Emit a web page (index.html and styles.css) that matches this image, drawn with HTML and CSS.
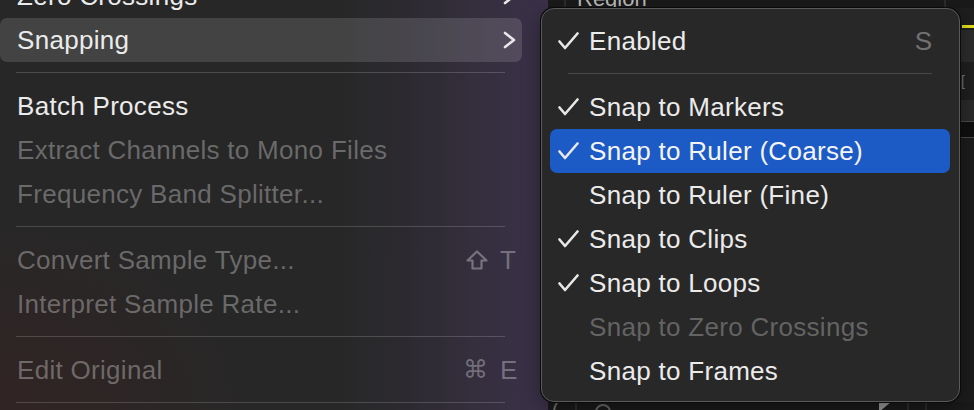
FILE: index.html
```html
<!DOCTYPE html>
<html>
<head>
<meta charset="utf-8">
<link rel="stylesheet" href="styles.css">
</head>
<body>
<div class="screen">
  <div class="main-menu">
    <div class="list">
      <div class="item"><span class="label">Zero Crossings</span><svg class="chev" viewBox="0 0 13 18"><polyline points="2,2 11,9 2,16"/></svg></div>
      <div class="item hover"><span class="label">Snapping</span><svg class="chev" viewBox="0 0 13 18"><polyline points="2,2 11,9 2,16"/></svg></div>
      <div class="sep"></div>
      <div class="item"><span class="label">Batch Process</span></div>
      <div class="item disabled"><span class="label">Extract Channels to Mono Files</span></div>
      <div class="item disabled"><span class="label">Frequency Band Splitter...</span></div>
      <div class="sep"></div>
      <div class="item disabled"><span class="label">Convert Sample Type...</span>
        <span class="key"><svg class="shift" viewBox="0 0 22 20"><path d="M11 1.5 L20.5 10.5 L15.5 10.5 L15.5 18.5 L6.5 18.5 L6.5 10.5 L1.5 10.5 Z"/></svg><span class="key-char">T</span></span></div>
      <div class="item disabled"><span class="label">Interpret Sample Rate...</span></div>
      <div class="sep"></div>
      <div class="item disabled"><span class="label">Edit Original</span>
        <span class="key"><span class="cmd">⌘</span><span class="key-char">E</span></span></div>
      <div class="sep"></div>
    </div>
  </div>

  <div class="app-bg">
    <div class="app-top">
      <span class="app-line"></span>
      <span class="app-title">Region</span>
      <span class="app-line far"></span>
    </div>
    <div class="app-mid">
      <div class="strip">
        <div class="s-a"></div>
        <div class="s-yellow"></div>
        <div class="s-b"></div>
        <div class="s-c"></div>
        <div class="s-d"><span class="bracket">[</span></div>
        <div class="s-e"></div>
        <div class="s-f"></div>
        <div class="s-g"></div>
      </div>
    </div>
    <div class="app-bottom">
      <span class="b-paren">(</span>
      <span class="app-line"></span>
      <span class="b-circle"></span>
      <span class="b-tri"></span>
      <span class="app-line"></span>
      <span class="app-line"></span>
    </div>
  </div>

  <div class="submenu">
    <div class="sub-item"><svg class="check" viewBox="0 0 21 18"><polyline points="1.5,9.5 7,16 19.5,1.5"/></svg><span class="label">Enabled</span><span class="sub-key">S</span></div>
    <div class="sub-sep"></div>
    <div class="sub-item"><svg class="check" viewBox="0 0 21 18"><polyline points="1.5,9.5 7,16 19.5,1.5"/></svg><span class="label">Snap to Markers</span></div>
    <div class="sub-item selected"><svg class="check" viewBox="0 0 21 18"><polyline points="1.5,9.5 7,16 19.5,1.5"/></svg><span class="label">Snap to Ruler (Coarse)</span></div>
    <div class="sub-item"><span class="nocheck"></span><span class="label">Snap to Ruler (Fine)</span></div>
    <div class="sub-item"><svg class="check" viewBox="0 0 21 18"><polyline points="1.5,9.5 7,16 19.5,1.5"/></svg><span class="label">Snap to Clips</span></div>
    <div class="sub-item"><svg class="check" viewBox="0 0 21 18"><polyline points="1.5,9.5 7,16 19.5,1.5"/></svg><span class="label">Snap to Loops</span></div>
    <div class="sub-item disabled"><span class="nocheck"></span><span class="label">Snap to Zero Crossings</span></div>
    <div class="sub-item"><span class="nocheck"></span><span class="label">Snap to Frames</span></div>
  </div>
</div>
</body>
</html>
```

FILE: styles.css
```css
html, body {
  margin: 0;
  padding: 0;
  background: #1c1c1c;
}

.screen {
  position: relative;
  width: 974px;
  height: 410px;
  overflow: hidden;
  display: flex;
  font-family: "Liberation Sans", Arial, sans-serif;
  font-size: 26px;
  color: #ebebeb;
}

.label {
  letter-spacing: 0.3px;
}

/* ---------- main (left) menu ---------- */
.main-menu {
  width: 548px;
  flex: none;
  height: 410px;
  background:
    radial-gradient(ellipse 260px 200px at 0% 100%, rgba(70, 30, 30, 0.35), rgba(70, 30, 30, 0) 100%),
    linear-gradient(to right, #272727 0%, #272727 62%, #2c2a30 74%, #342e3d 86%, #3b3149 100%);
}

.list {
  width: 522px;
  margin-top: -26px;
  display: flex;
  flex-direction: column;
}

.item {
  height: 44px;
  display: flex;
  align-items: center;
  padding: 0 6px 0 17px;
  border-radius: 7px;
  white-space: nowrap;
}

.item.hover {
  background: rgba(255, 255, 255, 0.135);
}

.item.disabled {
  color: rgba(255, 255, 255, 0.31);
}

.chev {
  margin-left: auto;
  width: 13px;
  height: 18px;
  fill: none;
  stroke: #e8e8e8;
  stroke-width: 2.6;
  stroke-linecap: round;
  stroke-linejoin: round;
}

.key {
  margin-left: auto;
  display: flex;
  align-items: center;
  gap: 12px;
  color: rgba(255, 255, 255, 0.31);
  padding-right: 1px;
}

.shift {
  width: 22px;
  height: 20px;
  fill: none;
  stroke: rgba(255, 255, 255, 0.33);
  stroke-width: 2.2;
  stroke-linejoin: round;
}

.cmd {
  font-family: "DejaVu Sans", sans-serif;
  font-size: 25px;
  line-height: 26px;
}

.key-char {
  width: 15px;
  text-align: center;
}

.sep {
  height: 22px;
  display: flex;
  flex-direction: column;
  justify-content: center;
  padding: 0 17px 0 16px;
}

.sep::before {
  content: "";
  display: block;
  height: 1px;
  margin-bottom: 2px;
  background: rgba(255, 255, 255, 0.17);
}

/* ---------- background app ---------- */
.app-bg {
  flex: 1;
  height: 410px;
  display: flex;
  flex-direction: column;
  background: #1d1d1d;
}

.app-top {
  height: 8px;
  flex: none;
  display: flex;
  align-items: flex-start;
  background: #1a1a1a;
  overflow: hidden;
}

.app-line {
  width: 2px;
  align-self: stretch;
  background: #2c2c2c;
  margin-left: 16px;
}

.app-line.far {
  margin-left: auto;
  margin-right: 28px;
}

.app-title {
  font-size: 22px;
  color: #bbbbbb;
  margin-left: 11px;
  line-height: 22px;
  margin-top: -12px;
}

.app-mid {
  flex: 1;
  display: flex;
  justify-content: flex-end;
}

.strip {
  width: 14px;
  display: flex;
  flex-direction: column;
  background: #1c1c1c;
}

.s-a { height: 17px; background: #1e1e1e; }
.s-yellow { height: 3px; margin-left: 2px; background: #e2df1c; }
.s-b { height: 2px; background: #1e1e1e; }
.s-c { height: 32px; background: #2c2c2c; }
.s-d {
  height: 38px;
  background: #1f1f1f;
  display: flex;
  align-items: center;
  padding-left: 1px;
}
.bracket { font-size: 14px; color: #777; line-height: 14px; }
.s-e { height: 21px; background: #2a2a2a; }
.s-f { height: 15px; background: #0f0f0f; border: 1px solid #4a4a4a; border-right: none; }
.s-g { flex: 1; background: #1c1c1c; }

.app-bottom {
  height: 8px;
  flex: none;
  display: flex;
  align-items: flex-start;
  background: #1a1a1a;
  overflow: hidden;
}

.b-paren {
  font-size: 20px;
  line-height: 20px;
  color: #777;
  margin-left: 4px;
  margin-top: -2px;
}

.b-circle {
  width: 16px;
  height: 16px;
  border: 2px solid #6a6a6a;
  border-radius: 50%;
  margin-left: 18px;
  margin-top: 2px;
  box-sizing: border-box;
}

.b-tri {
  width: 0;
  height: 0;
  border-left: 12px solid #9a9a9a;
  border-bottom: 10px solid transparent;
  margin-left: 268px;
}

/* ---------- submenu (overlay) ---------- */
.submenu {
  position: absolute;
  left: 541px;
  top: 8px;
  width: 419px;
  height: 394px;
  box-sizing: border-box;
  padding: 10px 9px 9px 8px;
  background: #282828;
  border: 1px solid #5a5a5a;
  border-radius: 13px;
  box-shadow: 0 0 0 1px #0a0a0a, 0 6px 20px rgba(0, 0, 0, 0.4);
  display: flex;
  flex-direction: column;
}

.sub-item {
  height: 44px;
  flex: none;
  display: flex;
  align-items: center;
  padding: 0 18px 0 8px;
  border-radius: 7px;
  white-space: nowrap;
}

.sub-item.selected {
  background: #1c5ac6;
  color: #f4f4f4;
}

.sub-item.disabled {
  color: rgba(255, 255, 255, 0.28);
}

.check {
  width: 21px;
  height: 18px;
  margin-right: 10px;
  flex: none;
  fill: none;
  stroke: #e8e8e8;
  stroke-width: 2.6;
  stroke-linecap: round;
  stroke-linejoin: round;
}

.nocheck {
  width: 21px;
  margin-right: 10px;
  flex: none;
}

.sub-key {
  margin-left: auto;
  color: rgba(255, 255, 255, 0.35);
}

.sub-sep {
  height: 22px;
  flex: none;
  display: flex;
  flex-direction: column;
  justify-content: center;
  padding: 0 18px;
}

.sub-sep::before {
  content: "";
  display: block;
  height: 1px;
  margin-bottom: 2px;
  background: rgba(255, 255, 255, 0.15);
}
```
